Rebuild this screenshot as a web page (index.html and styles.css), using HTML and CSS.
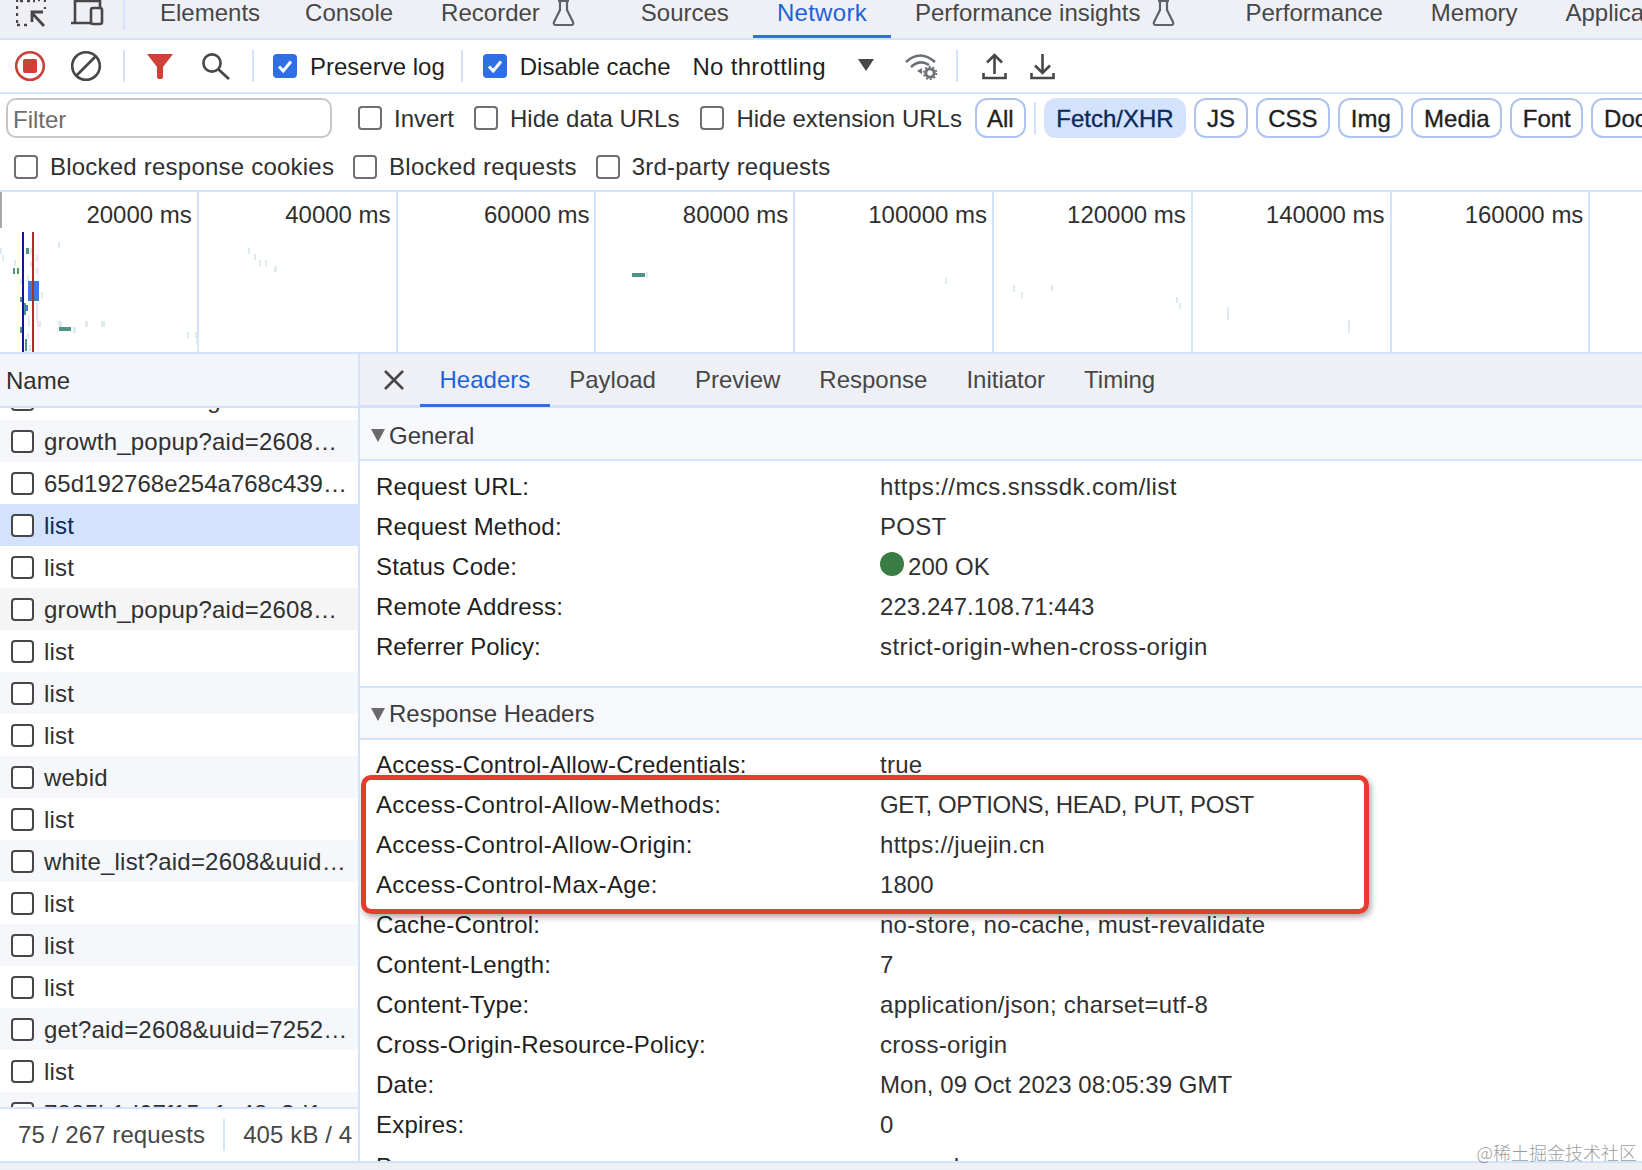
FILE: index.html
```html
<!DOCTYPE html>
<html lang="en">
<head>
<meta charset="utf-8">
<title>DevTools Network</title>
<link rel="stylesheet" href="styles.css">
</head>
<body>
<div class="page">
  <nav class="topbar">
    <svg class="ic-inspect" width="30" height="27" viewBox="0 0 30 27"><path d="M1 0v2M1 6v3M1 13v3M1 20v3M1 25h3M8 25h3M22 0h2M29 0v2M29 7v2M4 1h3M11 1h3M17 1h2" fill="none" stroke="#474747" stroke-width="2.4"/><path d="M28 26 16 13M16 22V12h11" fill="none" stroke="#474747" stroke-width="2.8"/></svg>
    <svg class="ic-device" width="34" height="27" viewBox="0 0 34 27"><path d="M5 -2v24M1 23h21M5 1h25v7" fill="none" stroke="#474747" stroke-width="2.6"/><rect x="21" y="8" width="11" height="16" rx="2" fill="none" stroke="#474747" stroke-width="2.6"/></svg>
    <span class="vsep top"></span>
    <a class="tab first">Elements</a>
    <a class="tab">Console</a>
    <a class="tab">Recorder<svg class="flask" width="23" height="26" viewBox="0 0 23 26"><path d="M6 1h11M8 1v9L2 22q-1 3 2 3h15q3 0 2-3L15 10V1" fill="none" stroke="#5f6368" stroke-width="2.2"/></svg></a>
    <a class="tab">Sources</a>
    <a class="tab active">Network</a>
    <a class="tab">Performance insights<svg class="flask wide" width="23" height="26" viewBox="0 0 23 26"><path d="M6 1h11M8 1v9L2 22q-1 3 2 3h15q3 0 2-3L15 10V1" fill="none" stroke="#5f6368" stroke-width="2.2"/></svg></a>
    <a class="tab">Performance</a>
    <a class="tab">Memory</a>
    <a class="tab">Application</a>
  </nav>

  <div class="toolbar">
    <svg class="tool rec" width="32" height="32" viewBox="0 0 32 32"><circle cx="16" cy="16" r="13.8" fill="none" stroke="#c9423a" stroke-width="2.6"/><rect x="9" y="9" width="14" height="14" rx="2" fill="#cf4136"/></svg>
    <svg class="tool clear" width="32" height="32" viewBox="0 0 32 32"><circle cx="16" cy="16" r="13.8" fill="none" stroke="#474747" stroke-width="2.6"/><path d="M6.5 25.5 25.5 6.5" stroke="#474747" stroke-width="2.6"/></svg>
    <span class="vsep s1"></span>
    <svg class="tool funnel" width="26" height="25" viewBox="0 0 26 25"><path d="M0 0h26L16 13v10q0 2-3 2t-3-2V13z" fill="#cf4136"/></svg>
    <svg class="tool search" width="29" height="28" viewBox="0 0 29 28"><circle cx="11" cy="11" r="8.6" fill="none" stroke="#474747" stroke-width="2.6"/><path d="M17 17 28 27" stroke="#474747" stroke-width="2.8"/></svg>
    <span class="vsep s2"></span>
    <label class="check on pres"><svg class="tick" width="24" height="24" viewBox="0 0 24 24"><rect width="24" height="24" rx="4" fill="#2f6fe4"/><path d="M6 12.5l4.2 4.4L18 7.5" fill="none" stroke="#fff" stroke-width="3"/></svg>Preserve log</label>
    <span class="vsep s3"></span>
    <label class="check on dis"><svg class="tick" width="24" height="24" viewBox="0 0 24 24"><rect width="24" height="24" rx="4" fill="#2f6fe4"/><path d="M6 12.5l4.2 4.4L18 7.5" fill="none" stroke="#fff" stroke-width="3"/></svg>Disable cache</label>
    <span class="throttle">No throttling</span>
    <span class="caret"></span>
    <svg class="tool wifi" width="34" height="28" viewBox="0 0 34 28"><path d="M2 10Q16 -3 31 10M7 15Q16 7 25 13" fill="none" stroke="#6b6f75" stroke-width="2.6"/><path d="M13 19l5-3v6z" fill="#6b6f75"/><circle cx="26" cy="21" r="4.2" fill="none" stroke="#6b6f75" stroke-width="3"/><circle cx="26" cy="21" r="6.4" fill="none" stroke="#6b6f75" stroke-width="1.6" stroke-dasharray="2 2"/></svg>
    <span class="vsep s4"></span>
    <svg class="tool up" width="25" height="27" viewBox="0 0 25 27"><path d="M12.5 21V2M5 9.500 12.500 2 20 9.500M1.500 20v5h22v-5" fill="none" stroke="#474747" stroke-width="2.6"/></svg>
    <svg class="tool down" width="25" height="27" viewBox="0 0 25 27"><path d="M12.500 1v19M5 12.500 12.500 20 20 12.500M1.500 20v5h22v-5" fill="none" stroke="#474747" stroke-width="2.6"/></svg>
  </div>

  <div class="filters">
    <div class="filter-row one">
      <div class="filter-input">Filter</div>
      <label class="check invert"><span class="box"></span>Invert</label>
      <label class="check hidedata"><span class="box"></span>Hide data URLs</label>
      <label class="check hideext"><span class="box"></span>Hide extension URLs</label>
      <span class="chip all">All</span>
      <span class="vsep s5"></span>
      <span class="chip sel">Fetch/XHR</span>
      <span class="chip">JS</span>
      <span class="chip">CSS</span>
      <span class="chip">Img</span>
      <span class="chip">Media</span>
      <span class="chip">Font</span>
      <span class="chip">Doc</span>
    </div>
    <div class="filter-row two">
      <label class="check"><span class="box"></span>Blocked response cookies</label>
      <label class="check"><span class="box"></span>Blocked requests</label>
      <label class="check"><span class="box"></span>3rd-party requests</label>
    </div>
  </div>

  <section class="overview">
    <div class="cell"><span>20000 ms</span></div>
    <div class="cell"><span>40000 ms</span></div>
    <div class="cell"><span>60000 ms</span></div>
    <div class="cell"><span>80000 ms</span></div>
    <div class="cell"><span>100000 ms</span></div>
    <div class="cell"><span>120000 ms</span></div>
    <div class="cell"><span>140000 ms</span></div>
    <div class="cell"><span>160000 ms</span></div>
    <div class="cell"></div>
    <svg class="chart" width="1642" height="160" viewBox="0 192 1642 160">
      <g fill="#dcebf0">
        <rect x="0" y="248" width="2" height="6"/><rect x="2" y="255" width="2" height="6"/><rect x="14" y="260" width="2" height="6"/>
        <rect x="58" y="242" width="2" height="6"/><rect x="30" y="248" width="2" height="6"/><rect x="36" y="255" width="2" height="6"/>
        <rect x="36" y="268" width="2" height="6"/><rect x="20" y="279" width="2" height="5"/><rect x="30" y="261" width="2" height="6"/>
        <rect x="27" y="275" width="2" height="6"/><rect x="41" y="292" width="2" height="6"/><rect x="36" y="303" width="2" height="6"/>
        <rect x="36" y="309" width="2" height="6"/><rect x="36" y="315" width="2" height="6"/><rect x="28" y="315" width="2" height="6"/>
        <rect x="28" y="321" width="2" height="6"/><rect x="32" y="321" width="2" height="6"/><rect x="37" y="321" width="4" height="6"/>
        <rect x="58" y="321" width="4" height="6"/><rect x="85" y="321" width="3" height="6"/><rect x="101" y="321" width="4" height="6"/>
        <rect x="73" y="327" width="3" height="6"/><rect x="27" y="333" width="2" height="6"/><rect x="29" y="345" width="2" height="6"/>
        <rect x="187" y="332" width="2" height="6"/><rect x="195" y="332" width="2" height="6"/><rect x="196" y="339" width="2" height="6"/><rect x="197" y="345" width="2" height="6"/>
        <rect x="248" y="248" width="2" height="6"/><rect x="254" y="254" width="2" height="6"/><rect x="259" y="260" width="2" height="6"/><rect x="265" y="260" width="2" height="6"/><rect x="274" y="266" width="3" height="6"/>
        <rect x="945" y="278" width="2" height="6"/><rect x="1013" y="285" width="2" height="7"/><rect x="1021" y="292" width="2" height="6"/><rect x="1051" y="285" width="2" height="6"/>
        <rect x="1176" y="297" width="2" height="6"/><rect x="1179" y="303" width="2" height="6"/><rect x="1227" y="307" width="2" height="13"/><rect x="1348" y="320" width="2" height="13"/>
        <rect x="646" y="272" width="2" height="6"/>
      </g>
      <g fill="#4f9486">
        <rect x="26" y="248" width="3" height="6"/><rect x="13" y="268" width="2" height="6"/><rect x="17" y="268" width="2" height="6"/>
        <rect x="20" y="297" width="2" height="5"/><rect x="24" y="303" width="2" height="6"/><rect x="24" y="309" width="2" height="6"/>
        <rect x="20" y="327" width="4" height="6"/><rect x="25" y="339" width="2" height="6"/><rect x="25" y="345" width="2" height="6"/>
        <rect x="59" y="327" width="12" height="4"/><rect x="632" y="273" width="13" height="4"/>
      </g>
      <rect x="28" y="281" width="11" height="20" fill="#3f78e0"/>
      <rect x="25" y="305" width="3" height="6" fill="#3f78e0"/>
      <rect x="22" y="232" width="2" height="120" fill="#14149c"/>
      <rect x="32" y="232" width="2" height="120" fill="#b52a2a"/>
      <rect x="0" y="192" width="2" height="36" fill="#a8a8a8"/>
    </svg>
  </section>

  <main class="split">
    <aside class="list">
      <div class="list-head">Name</div>
      <div class="rows">
        <div class="rows-inner">
          <div class="row"><span class="box"></span><span class="nm">collected-setting-data</span></div>
          <div class="row stripe"><span class="box"></span><span class="nm">growth_popup?aid=2608&amp;uuid=7252</span></div>
          <div class="row"><span class="box"></span><span class="nm hash">65d192768e254a768c4390ac1f2d</span></div>
          <div class="row selected"><span class="box"></span><span class="nm">list</span></div>
          <div class="row"><span class="box"></span><span class="nm">list</span></div>
          <div class="row hover"><span class="box"></span><span class="nm">growth_popup?aid=2608&amp;uuid=7252</span></div>
          <div class="row"><span class="box"></span><span class="nm">list</span></div>
          <div class="row stripe"><span class="box"></span><span class="nm">list</span></div>
          <div class="row"><span class="box"></span><span class="nm">list</span></div>
          <div class="row stripe"><span class="box"></span><span class="nm">webid</span></div>
          <div class="row"><span class="box"></span><span class="nm">list</span></div>
          <div class="row stripe"><span class="box"></span><span class="nm">white_list?aid=2608&amp;uuid=7252</span></div>
          <div class="row"><span class="box"></span><span class="nm">list</span></div>
          <div class="row stripe"><span class="box"></span><span class="nm">list</span></div>
          <div class="row"><span class="box"></span><span class="nm">list</span></div>
          <div class="row stripe"><span class="box"></span><span class="nm">get?aid=2608&amp;uuid=7252896413</span></div>
          <div class="row"><span class="box"></span><span class="nm">list</span></div>
          <div class="row stripe"><span class="box"></span><span class="nm">7885b1d67f15a1e48e3d1f4a6c</span></div>
        </div>
      </div>
      <footer class="status">
        <span>75 / 267 requests</span>
        <span class="vsep s6"></span>
        <span>405 kB / 4</span>
      </footer>
    </aside>

    <div class="details">
      <div class="dtabs">
        <svg class="close" width="20" height="20" viewBox="0 0 20 20"><path d="M1 1 19 19M19 1 1 19" stroke="#474747" stroke-width="2.6"/></svg>
        <a class="dtab active">Headers</a>
        <a class="dtab">Payload</a>
        <a class="dtab">Preview</a>
        <a class="dtab">Response</a>
        <a class="dtab">Initiator</a>
        <a class="dtab">Timing</a>
      </div>
      <div class="sec-head first"><i class="tri"></i>General</div>
      <dl class="kv general">
        <div class="kvr"><dt>Request URL:</dt><dd class="wide">https://mcs.snssdk.com/list</dd></div>
        <div class="kvr"><dt>Request Method:</dt><dd>POST</dd></div>
        <div class="kvr"><dt>Status Code:</dt><dd class="num"><i class="dot"></i>200 OK</dd></div>
        <div class="kvr"><dt>Remote Address:</dt><dd class="num">223.247.108.71:443</dd></div>
        <div class="kvr"><dt class="tight">Referrer Policy:</dt><dd class="wide">strict-origin-when-cross-origin</dd></div>
      </dl>
      <div class="sec-head second"><i class="tri"></i>Response Headers</div>
      <dl class="kv">
        <div class="kvr"><dt>Access-Control-Allow-Credentials:</dt><dd>true</dd></div>
        <div class="kvr"><dt class="loose">Access-Control-Allow-Methods:</dt><dd class="caps">GET, OPTIONS, HEAD, PUT, POST</dd></div>
        <div class="kvr"><dt class="loose">Access-Control-Allow-Origin:</dt><dd>https://juejin.cn</dd></div>
        <div class="kvr"><dt class="loose">Access-Control-Max-Age:</dt><dd class="num">1800</dd></div>
        <div class="kvr"><dt>Cache-Control:</dt><dd class="snug">no-store, no-cache, must-revalidate</dd></div>
        <div class="kvr"><dt>Content-Length:</dt><dd class="num">7</dd></div>
        <div class="kvr"><dt>Content-Type:</dt><dd>application/json; charset=utf-8</dd></div>
        <div class="kvr"><dt>Cross-Origin-Resource-Policy:</dt><dd>cross-origin</dd></div>
        <div class="kvr"><dt>Date:</dt><dd class="num">Mon, 09 Oct 2023 08:05:39 GMT</dd></div>
        <div class="kvr"><dt>Expires:</dt><dd class="num">0</dd></div>
        <div class="kvr last"><dt>Pragma:</dt><dd>no-cache</dd></div>
      </dl>
      <div class="redbox"></div>
    </div>
  </main>
  <div class="bottom"></div>
  <div class="watermark">@稀土掘金技术社区</div>
</div>
</body>
</html>
```
FILE: styles.css
```css
* { box-sizing: border-box; }
html, body { margin: 0; padding: 0; background: #fff; }
.page {
  position: relative;
  width: 1642px;
  height: 1170px;
  overflow: hidden;
  font-family: "Liberation Sans", Arial, sans-serif;
  font-size: 24px;
  color: #303030;
}

/* top tab bar */
.topbar {
  display: flex;
  align-items: flex-start;
  height: 40px;
  padding-left: 16px;
  background: #eef0f6;
  border-bottom: 2px solid #d3e3fd;
  overflow: hidden;
}
.ic-inspect, .ic-device { flex: none; }
.ic-device { margin-left: 24px; }
.vsep { display: block; width: 2px; background: #d3e3fd; flex: none; }
.vsep.top { height: 30px; margin-left: 19px; }
.tab {
  display: flex;
  align-items: flex-start;
  flex: none;
  height: 38px;
  padding: 0 24px;
  line-height: 26px;
  color: #474747;
  white-space: nowrap;
}
.tab.first { margin-left: 11px; padding-right: 21px; }
.tab.active { color: #1f62d6; border-bottom: 3px solid #2f6fe0; letter-spacing: .3px; }
.flask { flex: none; margin: 0 18px 0 12px; }
.flask.wide { margin-right: 22px; }

/* toolbar */
.toolbar {
  display: flex;
  align-items: center;
  height: 54px;
  padding-left: 14px;
  border-bottom: 2px solid #d3e3fd;
  background: #fff;
}
.tool { flex: none; display: block; }
.clear { margin-left: 24px; }
.vsep.s1 { height: 32px; margin-left: 21px; }
.funnel { margin-left: 22px; }
.search { margin-left: 28px; }
.vsep.s2 { height: 32px; margin-left: 22px; }
.check {
  display: flex;
  align-items: center;
  flex: none;
  padding-top: 2px;
  color: #303030;
  white-space: nowrap;
}
.tick { flex: none; margin: -2px 13px 0 0; }
.check.pres { margin-left: 19px; color: #1f1f1f; }
.vsep.s3 { height: 32px; margin-left: 16px; }
.check.dis { margin-left: 20px; color: #1f1f1f; }
.throttle { margin-left: 22px; padding-top: 2px; color: #1f1f1f; white-space: nowrap; letter-spacing: .3px; }
.caret {
  flex: none;
  width: 0; height: 0;
  margin-left: 32px;
  margin-top: -2px;
  border-left: 8px solid transparent;
  border-right: 8px solid transparent;
  border-top: 12px solid #474747;
}
.wifi { margin-left: 30px; }
.vsep.s4 { height: 32px; margin-left: 18px; }
.up { margin-left: 24px; }
.down { margin-left: 23px; }

/* filter rows */
.filters {
  height: 98px;
  border-bottom: 2px solid #d3e3fd;
  background: #fff;
}
.filter-row { display: flex; align-items: center; white-space: nowrap; }
.filter-row.one { height: 50px; padding: 4px 0 6px 6px; overflow: hidden; }
.filter-input {
  flex: none;
  width: 326px;
  height: 40px;
  padding-left: 5px;
  line-height: 40px;
  border: 2px solid #c6c6c6;
  border-radius: 10px;
  color: #6d6d6d;
}
.box {
  display: block;
  flex: none;
  width: 24px;
  height: 24px;
  margin: -2px 12px 0 0;
  border: 2px solid #6f6f6f;
  border-radius: 4px;
  background: #fff;
}
.invert { margin-left: 26px; }
.hidedata { margin-left: 20px; }
.hideext { margin-left: 21px; }
.chip {
  flex: none;
  height: 40px;
  padding: 0 10.65px;
  line-height: 37px;
  border: 2px solid #aec4ee;
  border-radius: 12px;
  color: #1f1f1f;
  font-weight: 500;
  -webkit-text-stroke: 0.35px currentColor;
  margin-left: 8px;
}
.chip.all { margin-left: 13px; padding: 0 10px; }
.vsep.s5 { height: 32px; margin-left: 8px; }
.chip.sel { background: #d3e3fd; border-color: #d3e3fd; color: #0a2a5c; }
.filter-row.two { height: 46px; padding: 1px 0 3px 14px; gap: 19px; letter-spacing: .22px; }
.filter-row.two .box { margin-top: 0; }

/* overview */
.overview {
  position: relative;
  display: grid;
  grid-template-columns: repeat(9, 198.8px);
  height: 162px;
  border-bottom: 2px solid #d3e3fd;
  overflow: hidden;
  background: #fff;
}
.cell {
  height: 160px;
  padding: 10px 5px 0 0;
  text-align: right;
  border-right: 2px solid #d3e3fd;
  line-height: 26px;
  white-space: nowrap;
}
.chart { position: absolute; left: 0; top: 0; }

/* split */
.split { display: flex; height: 807px; }
.list {
  display: flex;
  flex-direction: column;
  flex: none;
  width: 360px;
  border-right: 2px solid #d3e3fd;
}
.list-head {
  flex: none;
  height: 54px;
  padding-left: 6px;
  line-height: 54px;
  background: #f3f5fa;
  border-bottom: 2px solid #d3e3fd;
}
.rows { flex: 1; overflow: hidden; }
.rows-inner { margin-top: -30px; }
.row {
  display: flex;
  align-items: center;
  height: 42px;
  padding: 0 6px 0 11px;
}
.row .box { border-color: #474747; width: 23px; height: 23px; margin: 0 10px 0 0; }
.nm {
  flex: 1;
  min-width: 0;
  padding-top: 2px;
  overflow: hidden;
  text-overflow: ellipsis;
  white-space: nowrap;
  letter-spacing: .2px;
}
.nm.hash { letter-spacing: 0; }
.stripe { background: #f5f7fb; }
.hover { background: #f5f5f5; }
.selected { background: #d3e3fd; color: #0a2a5c; }
.status {
  flex: none;
  display: flex;
  align-items: center;
  height: 54px;
  padding-left: 18px;
  border-top: 2px solid #d3e3fd;
  color: #474747;
  white-space: nowrap;
  overflow: hidden;
  letter-spacing: .1px;
}
.vsep.s6 { height: 32px; margin: 0 18px; }

/* details */
.details { position: relative; flex: 1; min-width: 0; overflow: hidden; }
.dtabs {
  display: flex;
  align-items: center;
  height: 54px;
  padding-left: 24px;
  background: #eef0f6;
  border-bottom: 3px solid #d3e3fd;
}
.close { flex: none; margin-right: 16px; }
.dtab {
  flex: none;
  height: 54px;
  padding: 0 19.5px;
  line-height: 54px;
  color: #474747;
}
.dtab.active { color: #1f62d6; border-bottom: 3px solid #2f6fe0; }
.sec-head {
  display: flex;
  align-items: center;
  height: 53px;
  padding: 2px 0 0 11px;
  background: #f6f8fc;
  border-bottom: 2px solid #d3e3fd;
  color: #3c3c3c;
}
.sec-head.first { padding-top: 4px; }
.sec-head.second { border-top: 2px solid #d3e3fd; height: 54px; }
.tri {
  flex: none;
  width: 0; height: 0;
  margin-right: 4px;
  border-left: 7px solid transparent;
  border-right: 7px solid transparent;
  border-top: 13px solid #6a6a6a;
}
.kv { margin: 0; padding: 5px 0 20px 16px; }
.kv.general { padding: 6px 0 19px 16px; }
.kvr { display: flex; height: 40px; line-height: 40px; }
.kvr.last { margin-top: 2px; }
dt { flex: none; width: 504px; color: #1f1f1f; white-space: nowrap; letter-spacing: .2px; }
dt.loose { letter-spacing: .36px; }
dt.tight { letter-spacing: -.05px; }
dd { margin: 0; color: #303030; white-space: nowrap; display: flex; align-items: center; letter-spacing: .28px; }
dd.wide { letter-spacing: .42px; }
dd.snug { letter-spacing: .22px; }
dd.num { letter-spacing: .05px; }
dd.caps { letter-spacing: -.4px; }
.dot {
  flex: none;
  width: 24px; height: 24px;
  margin-right: 4px;
  margin-top: -7px;
  border-radius: 50%;
  background: #3a7d44;
}
.redbox {
  position: absolute;
  left: 1px;
  top: 421px;
  width: 1008px;
  height: 139px;
  border: 5px solid #e63b2e;
  border-radius: 10px;
  box-shadow: 2px 3px 6px rgba(0, 0, 0, .35);
  pointer-events: none;
}

.bottom { height: 9px; background: #eef0f6; border-top: 2px solid #d3e3fd; }
.watermark {
  position: absolute;
  right: 5px;
  top: 1141px;
  font-family: "Noto Sans CJK SC", "Liberation Serif", serif;
  font-size: 18px;
  font-weight: 300;
  line-height: 22px;
  color: rgba(120, 120, 120, .75);
  white-space: nowrap;
}
```
